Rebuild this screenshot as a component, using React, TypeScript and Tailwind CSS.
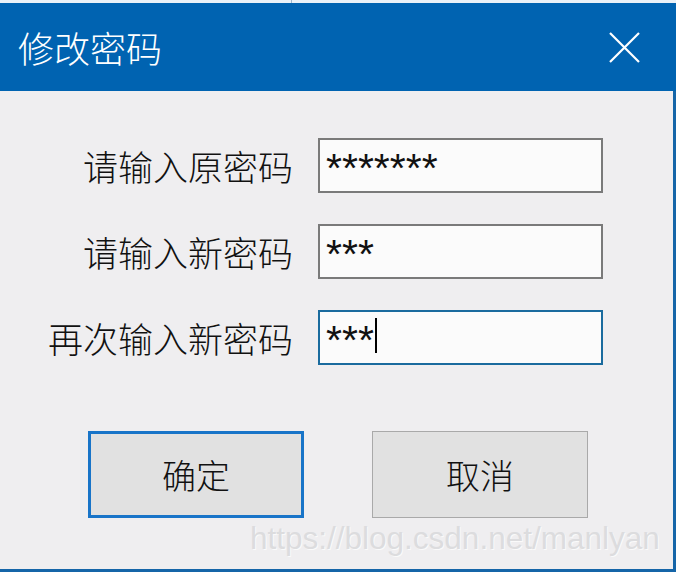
const cjk = { fontFamily: '"Noto Sans CJK SC", "Microsoft YaHei", sans-serif' };

function Field({ label, value, focused }: { label: string; value: string; focused?: boolean }) {
  return (
    <>
      <div className="flex items-center justify-end text-[35px] font-light leading-none text-[#111]" style={cjk}>
        {label}
      </div>
      <div
        className={`h-[55px] bg-[#fbfbfb] pl-[6px] pt-[8px] ${
          focused ? "border-2 border-[#1a6b9e]" : "border-2 border-[#7a7a7a]"
        }`}
      >
        <div
          className="flex items-start text-[41px] leading-[41px] text-[#111]"
          style={{ fontFamily: '"Liberation Sans", Arial, sans-serif' }}
        >
          {value}
          {focused && <span className="ml-[1px] mt-[-2px] inline-block h-[35px] w-[2px] bg-black" />}
        </div>
      </div>
    </>
  );
}

export default function App() {
  return (
    <div className="relative flex h-[572px] w-[676px] flex-col overflow-hidden bg-[#efeef0]">
      <div className="flex h-[3px] bg-[#e9f1f8]">
        <div className="ml-[291px] w-px bg-[#9fb6cc]" />
      </div>
      <div className="flex h-[88px] items-center justify-between bg-[#0063b1] pl-[18px] pr-[36px]">
        <span className="text-[36px] font-light leading-none text-white" style={cjk}>
          修改密码
        </span>
        <svg width="31" height="31" viewBox="0 0 31 31" className="mt-[1px]">
          <path d="M1 1 L30 30 M30 1 L1 30" stroke="white" strokeWidth="2.2" fill="none" />
        </svg>
      </div>
      <div className="flex flex-1 flex-col border-b-[3px] border-r-[3px] border-[#1565a8]">
        <div className="mt-[47px] grid grid-cols-[293px_285px] gap-x-[25px] gap-y-[31px]">
          <Field label="请输入原密码" value="*******" />
          <Field label="请输入新密码" value="***" />
          <Field label="再次输入新密码" value="***" focused />
        </div>
        <div className="mt-[66px] flex pl-[88px]">
          <button
            className="h-[87px] w-[216px] border-[3px] border-[#1874c8] bg-[#e1e1e1] text-[34px] font-light leading-none text-[#111]"
            style={cjk}
          >
            确定
          </button>
          <button
            className="ml-[68px] h-[87px] w-[216px] border border-[#a9a9a9] bg-[#e1e1e1] text-[34px] font-light leading-none text-[#111]"
            style={cjk}
          >
            取消
          </button>
        </div>
      </div>
      <div
        className="absolute left-[250px] top-[520px] text-[31.5px] leading-[36px] text-[#dcdcde]"
        style={{ fontFamily: '"Liberation Sans", Arial, sans-serif', textShadow: "1px 1px 0 #fafafa" }}
      >
        https://blog.csdn.net/manlyan
      </div>
    </div>
  );
}
